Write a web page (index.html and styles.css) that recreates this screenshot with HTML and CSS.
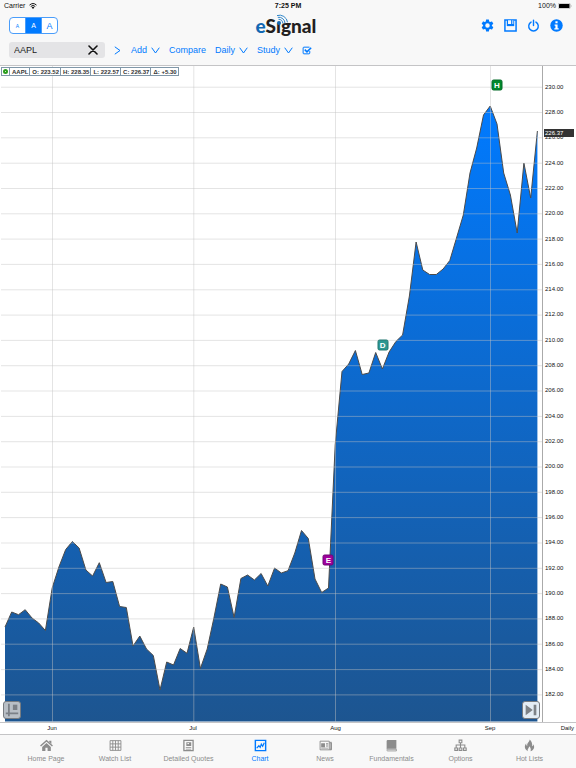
FILE: index.html
```html
<!DOCTYPE html>
<html lang="en">
<head>
<meta charset="utf-8">
<meta name="viewport" content="width=device-width, initial-scale=1">
<title>eSignal - AAPL chart</title>
<link rel="stylesheet" href="styles.css">
</head>
<body>
<header class="header">
  <div class="status">
    <div class="status-left"><span>Carrier</span>
      <svg class="wifi" viewBox="0 0 16 12" aria-hidden="true"><path d="M1 4.2a10.500 10.500 0 0 1 14 0M3.500 6.900a6.800 6.800 0 0 1 9 0" fill="none" stroke="#111" stroke-width="2"/><path d="M5.300 8.800a4 4 0 0 1 5.400 0L8 11.800z" fill="#111"/></svg>
    </div>
    <div class="clock">7:25 PM</div>
    <div class="status-right"><span>100%</span>
      <svg class="battery" viewBox="0 0 28 12" aria-hidden="true"><rect x=".5" y=".5" width="24" height="11" rx="2.500" fill="#fff" stroke="#888"/><rect x="2" y="2" width="21" height="8" rx="1" fill="#000"/><path d="M26 4v4q2-2 0-4z" fill="#888"/></svg>
    </div>
  </div>
  <div class="brand-row">
    <div class="sizes">
      <button class="size size-s" aria-label="Small text">A</button>
      <button class="size size-m active" aria-label="Medium text">A</button>
      <button class="size size-l" aria-label="Large text">A</button>
    </div>
    <div class="logo"><span class="logo-e">e</span>S<span class="logo-i">&#305;<svg class="waves" viewBox="0 0 14 12" aria-hidden="true"><circle cx="3" cy="9" r="2" fill="#1268b3"/><path d="M2.500 5.300a4 4 0 0 1 4.300 4.200M1.800 3.300a6.200 6.200 0 0 1 7.200 6.200M1 1.600a8 8 0 0 1 10.500 6.700" fill="none" stroke="#2f86c9" stroke-width="1"/></svg></span>gnal</div>
    <div class="actions">
      <button aria-label="Settings"><svg viewBox="1 1 22 22"><path fill="currentColor" d="M19.430 12.980c.04-.32.07-.64.07-.98s-.03-.66-.07-.98l2.110-1.650c.19-.15.24-.42.12-.64l-2-3.460c-.12-.22-.39-.3-.61-.22l-2.490 1c-.52-.4-1.080-.73-1.690-.98l-.38-2.650A.49.49 0 0 0 14 2h-4c-.25 0-.46.18-.49.42l-.38 2.650c-.61.25-1.170.59-1.690.98l-2.490-1c-.23-.09-.49 0-.61.22l-2 3.460c-.13.22-.07.49.12.64l2.110 1.650c-.04.32-.07.65-.07.98s.03.66.07.98l-2.110 1.650c-.19.15-.24.42-.12.64l2 3.460c.12.22.39.3.61.22l2.490-1c.52.4 1.080.73 1.690.98l.38 2.650c.03.24.24.42.49.42h4c.25 0 .46-.18.49-.42l.38-2.650c.61-.25 1.170-.59 1.690-.98l2.490 1c.23.09.49 0 .61-.22l2-3.460c.12-.22.07-.49-.12-.64zM12 15.800a3.800 3.800 0 1 1 0-7.600 3.800 3.800 0 0 1 0 7.600z"/></svg></button>
      <button aria-label="Save"><svg viewBox="1.500 1.500 21 21"><path fill="none" stroke="currentColor" stroke-width="2.400" d="M3 3h18v18H3z"/><path fill="currentColor" d="M6 3h12v10H6z"/><path fill="#f8f8f8" d="M8 3.500h5v6H8zM15 3.500h1.500v6H15z"/></svg></button>
      <button aria-label="Log out"><svg viewBox="0 0 24 24"><path fill="none" stroke="currentColor" stroke-width="2.600" stroke-linecap="round" d="M12 2v10M7.500 5.700a8.800 8.800 0 1 0 9 0"/></svg></button>
      <button aria-label="Information"><svg viewBox="0 0 24 24"><circle cx="12" cy="12" r="11.500" fill="currentColor"/><path fill="#fff" d="M10 4h4v4h-4zM8.500 10H14v7h2v2.500H8V17h2v-4.500H8.500z"/></svg></button>
    </div>
  </div>
  <div class="toolbar">
    <div class="symbol">
      <input type="text" value="AAPL" aria-label="Symbol">
      <button class="clear" aria-label="Clear symbol"><svg viewBox="0 0 10 10"><path d="M1 1l8 8M9 1L1 9" fill="none" stroke="#111" stroke-width="1.600" stroke-linecap="round"/></svg></button>
    </div>
    <button class="go" aria-label="Go"><svg viewBox="0 0 7 9"><path d="M.8.8l5.200 3.700-5.200 3.700" fill="none" stroke="currentColor"/></svg></button>
    <button class="tool">Add <svg class="chev" viewBox="0 0 9 7"><path d="M.7.700l3.800 5.300L8.300.7" fill="none" stroke="currentColor"/></svg></button>
    <button class="tool">Compare</button>
    <button class="tool">Daily <svg class="chev" viewBox="0 0 9 7"><path d="M.7.700l3.800 5.300L8.300.7" fill="none" stroke="currentColor"/></svg></button>
    <button class="tool">Study <svg class="chev" viewBox="0 0 9 7"><path d="M.7.700l3.800 5.300L8.300.7" fill="none" stroke="currentColor"/></svg></button>
    <button class="check" aria-label="Select studies"><svg viewBox="0 0 18 16"><path d="M13.500 2H3.500Q2 2 2 3.500v9Q2 14 3.500 14h9q1.500 0 1.500-1.500V9" fill="none" stroke="currentColor" stroke-width="1.800"/><path d="M5 6.500l4 4 7.500-7.500" fill="none" stroke="currentColor" stroke-width="2.800"/></svg></button>
  </div>
</header>

<main class="chart">
  <div class="plot">
    <svg class="area" viewBox="0 66 542 656" preserveAspectRatio="none" role="img" aria-label="AAPL daily price">
      <defs><linearGradient id="fill" gradientUnits="userSpaceOnUse" x1="0" y1="106" x2="0" y2="722"><stop offset="0" stop-color="#007aff"/><stop offset="1" stop-color="#1d5590"/></linearGradient></defs>
      <path id="shape" fill="url(#fill)"/>
      <polyline id="line" fill="none" stroke="#4b4b4b" stroke-width="1"/>
      <g id="grid" stroke="#c4c4c4" stroke-opacity=".45" stroke-width="1"></g>
    </svg>
    <div class="quote"><span class="dot-cell"><i class="dot"></i></span><span>AAPL</span><span>O: 223.52</span><span>H: 228.35</span><span>L: 222.57</span><span>C: 226.37</span><span>&Delta;: +5.30</span></div>
    <b class="pin pin-h">H</b>
    <b class="pin pin-d">D</b>
    <b class="pin pin-e">E</b>
    <button class="corner layout" aria-label="Chart layout"><svg viewBox="0 0 18 18"><path d="M5.500 2v14M2 12.800h14" fill="none" stroke="#7b8087" stroke-width="2"/><path d="M10 3h5v6h-5z" fill="#7b8087"/></svg></button>
    <button class="corner latest" aria-label="Go to latest"><svg viewBox="0 0 18 18"><path d="M3 3l8 6-8 6zM12 3h3v12h-3z" fill="#7d8287"/></svg></button>
  </div>
  <div class="prices">
    <div class="scale">
      <span>230.00</span><span>228.00</span><span>226.00</span><span>224.00</span><span>222.00</span><span>220.00</span><span>218.00</span><span>216.00</span><span>214.00</span><span>212.00</span><span>210.00</span><span>208.00</span><span>206.00</span><span>204.00</span><span>202.00</span><span>200.00</span><span>198.00</span><span>196.00</span><span>194.00</span><span>192.00</span><span>190.00</span><span>188.00</span><span>186.00</span><span>184.00</span><span>182.00</span>
    </div>
    <div class="last">226.37</div>
  </div>
</main>
<div class="dates"><span>Jun</span><span>Jul</span><span>Aug</span><span class="sep">Sep</span><span class="period">Daily</span></div>

<nav class="tabs">
  <a href="#"><svg viewBox="0 0 24 24"><path fill="none" stroke="currentColor" stroke-width="2.600" d="M1 13L12 3l11 10"/><path fill="currentColor" d="M17 3h4v6l-4-3.500zM12 7.500l8 7.200V22h-6v-6h-4v6H4v-7.300z"/></svg>Home Page</a>
  <a href="#"><svg viewBox="0 0 24 24"><path fill="none" stroke="currentColor" stroke-width="1.700" d="M2 3h20v18H2zM2 9h20M2 15h20M7 3v18M12 3v18M17 3v18"/></svg>Watch List</a>
  <a href="#"><svg viewBox="0 0 24 24"><path fill="none" stroke="currentColor" stroke-width="2.400" d="M3.500 2.500h17v19h-17z"/><path fill="currentColor" d="M8 6h9v7H8zM7 15h10v1.500H7zM7 18h10v1.500H7z"/><path fill="#f8f8f8" d="M10 7.500h3v2h-3z"/></svg>Detailed Quotes</a>
  <a href="#" class="active" aria-current="page"><svg viewBox="0 0 24 24"><path fill="none" stroke="currentColor" stroke-width="2.600" d="M2.500 2.500h19v19h-19z"/><path fill="none" stroke="currentColor" stroke-width="2.200" d="M5 17l4-4.500 2.500 3 2-6 2.500 4 3-6.500"/></svg>Chart</a>
  <a href="#"><svg viewBox="0 0 24 24"><path fill="none" stroke="currentColor" stroke-width="1.700" d="M2 4h17v16H2zM19 7h4v13h-4"/><path fill="currentColor" d="M4 8h7v7H4zM13 8h4v2h-4zM13 12h4v2h-4zM4 16h13v1.500H4zM21 5h2v15h-3v-2h1z"/></svg>News</a>
  <a href="#"><svg viewBox="0 0 24 24"><path fill="currentColor" d="M5 2h16v16H5q-2 0-2 2V4q0-2 2-2z"/><path fill="none" stroke="currentColor" stroke-width="1.500" d="M21 19v3H5q-1.500 0-1.500-1.500T5 19h16"/></svg>Fundamentals</a>
  <a href="#"><svg viewBox="0 0 24 24"><path fill="none" stroke="currentColor" stroke-width="2" d="M9.500 2h5v5h-5zM12 7v10M4 16v-5h16v5M1.500 16.500h5V21h-5zM9.500 16.500h5V21h-5zM17.500 16.500h5V21h-5z"/></svg>Options</a>
  <a href="#"><svg viewBox="0 0 24 24"><path fill="currentColor" d="M12 1c1 4-6 7-4 12-2-1-2.500-3-2-5-5 6-2 12 3 14.500-1.500-4 2-5 2.500-9 2.500 2 3.500 6 2.500 9 7-3 8-8 5-13 0 2-.5 3-2 4 .5-5-1-10-5-12.500z"/></svg>Hot Lists</a>
</nav>
<script src="chart.js"></script>
</body>
</html>
```

FILE: styles.css
```css
* { box-sizing: border-box; }
body {
  margin: 0;
  min-height: 100vh;
  display: flex;
  flex-direction: column;
  background: #fff;
  color: #111;
  font-family: "Liberation Sans", Arial, sans-serif;
  font-size: 9px;
}
button {
  padding: 0;
  border: 0;
  background: none;
  color: inherit;
  font: inherit;
  display: flex;
  align-items: center;
  justify-content: center;
}
svg { display: block; }

.header {
  height: 66px;
  flex: none;
  background: #f8f8f8;
  border-bottom: 1px solid #c4c4c6;
  color: #007aff;
}
.status {
  display: grid;
  grid-template-columns: 1fr auto 1fr;
  height: 12px;
  align-items: center;
  padding: 0 4px;
  color: #111;
  font-size: 7px;
  line-height: 12px;
}
.status-left, .status-right { display: flex; align-items: center; gap: 4px; }
.status-right { justify-content: flex-end; gap: 2px; }
.clock { font-weight: bold; }
.wifi { width: 8px; height: 6px; }
.battery { width: 14px; height: 6px; }

.brand-row {
  display: grid;
  grid-template-columns: 1fr auto 1fr;
  height: 27px;
  align-items: center;
  padding: 0 13px 0 9px;
}
.sizes {
  display: flex;
  width: 49px;
  height: 17px;
  border: 1px solid #4a9dfa;
  border-radius: 4px;
  overflow: hidden;
  background: #fff;
}
.size { flex: 1; }
.size + .size { border-left: 1px solid #4a9dfa; }
.size-s { font-size: 5px; }
.size-m { font-size: 7px; }
.size-l { font-size: 9px; }
.size.active { background: #007aff; color: #fff; }
.logo {
  font-family: Lato, sans-serif;
  font-weight: 900;
  font-size: 19px;
  line-height: 27px;
  color: #231f20;
}
.logo-e { color: #1268b3; }
.logo-i { position: relative; }
.waves { position: absolute; left: 0; top: 0; width: 14px; height: 12px; }
.actions { display: flex; justify-content: flex-end; gap: 10px; }
.actions svg { width: 13px; height: 13px; }

.toolbar {
  display: flex;
  align-items: center;
  height: 22px;
  padding-left: 9px;
  font-size: 9px;
}
.symbol {
  display: flex;
  align-items: center;
  width: 96px;
  height: 16px;
  padding: 0 7px 0 5px;
  border-radius: 3px;
  background: #e4e4e6;
}
.symbol input {
  flex: 1;
  min-width: 0;
  padding: 0;
  border: 0;
  background: none;
  color: #222;
  font: inherit;
  outline: none;
}
.clear svg { width: 10px; height: 10px; }
.go { margin: 0 10px 0 9px; }
.go svg { width: 7px; height: 9px; }
.tool { gap: 4px; margin-right: 9px; }
.chev { width: 9px; height: 7px; }
.check svg { width: 10px; height: 9px; }

.chart { flex: 1; display: flex; min-height: 400px; }
.plot { flex: 1; position: relative; min-width: 0; }
.area { position: absolute; inset: 0; width: 100%; height: 100%; }
.quote {
  position: absolute;
  left: 1px;
  top: 1px;
  display: flex;
  height: 9px;
  border: 1px solid #8097a8;
  background: #fff;
  font-size: 6px;
  font-weight: bold;
  line-height: 8px;
  white-space: nowrap;
  color: #333;
}
.quote span { padding: 0 1px 0 2px; }
.quote span + span { border-left: 1px solid #8097a8; }
.quote .dot-cell { display: flex; align-items: center; padding: 0 1px; }
.dot { width: 5px; height: 5px; border: 2px solid #2a9d1c; border-radius: 50%; }
.pin {
  position: absolute;
  width: 11px;
  height: 11px;
  transform: translate(-50%, -50%);
  border: 1px solid;
  border-radius: 2px;
  color: #fff;
  font-size: 8px;
  line-height: 9px;
  text-align: center;
}
.pin-h { left: 91.700%; top: 2.900%; background: #00892c; border-color: #056b28; }
.pin-d { left: 70.600%; top: 42.500%; background: #2c9791; border-color: #237872; }
.pin-e { left: 60.600%; top: 75.300%; background: #a0009c; border-color: #6d0672; }
.corner {
  position: absolute;
  bottom: 3px;
  width: 18px;
  height: 18px;
  border: 1px solid #787c81;
  border-radius: 3px;
  background: #b9bfc6;
}
.corner svg { width: 16px; height: 16px; flex: none; }
.layout { left: 3px; }
.latest { right: 2px; background: #e4edf5; }
.prices {
  position: relative;
  width: 34px;
  flex: none;
  border-left: 1px solid #aaa;
  font-size: 6px;
  color: #111;
}
.scale {
  display: flex;
  flex-direction: column;
  height: 100%;
  padding: 8px 0 15px 2px;
}
.scale span { flex: 1; display: flex; align-items: center; }
.last {
  position: absolute;
  left: 1px;
  right: 2px;
  top: 9.600%;
  height: 8px;
  padding-left: 1px;
  background: #333;
  color: #fff;
  line-height: 8px;
}

.dates {
  display: grid;
  grid-template-columns: 104fr 178fr 107fr 49fr 104fr 34fr;
  height: 12px;
  flex: none;
  border-top: 1px solid #c4c4c6;
  font-size: 6px;
  line-height: 11px;
  text-align: center;
}
.sep { grid-column: 5; }
.period { text-align: right; padding-right: 2px; }

.tabs {
  display: grid;
  grid-template-columns: 68fr 70fr 77fr 66fr 64fr 69fr 69fr 69fr;
  height: 34px;
  flex: none;
  padding: 0 12px;
  border-top: 1px solid #c4c4c6;
  background: #f8f8f8;
}
.tabs a {
  min-width: 0;
  display: flex;
  flex-direction: column;
  align-items: center;
  gap: 3px;
  padding-top: 4px;
  color: #8c8c8c;
  font-size: 7px;
  line-height: 8px;
  text-decoration: none;
  white-space: nowrap;
}
.tabs a.active { color: #007aff; }
.tabs svg { width: 13px; height: 13px; flex: none; }
```

FILE: chart.js
```js
// Height of each daily close in the plot's own units, oldest first.
const closes = [
  627, 612, 614.7, 609.7, 618, 623, 630.5, 588, 567, 549.5, 541.5, 548, 570, 576,
  562.7, 582.5, 581.5, 606.5, 607.5, 646, 636, 649, 655.5, 690, 662, 665, 648.5,
  653.3, 627, 668.5, 649, 618, 584, 587, 617.5, 578.5, 575, 580, 573.5, 586, 568,
  573, 570.7, 553, 530.5, 538.5, 579, 592.5, 588, 445, 371.5, 364, 350.5, 374.5,
  373, 352.5, 369, 352, 341.5, 335, 296, 242, 270, 274.5, 274.5, 269, 260.5, 238,
  215, 173, 148, 115, 106, 124, 173, 195, 233, 163, 198, 131
];
const first = 5, last = 537.4, bottom = 721.5;
const step = (last - first) / (closes.length - 1);
const points = closes.map((y, i) => `${(first + i * step).toFixed(1)},${y}`).join(' ');
document.getElementById('line').setAttribute('points', points);
document.getElementById('shape').setAttribute('d', `M${first},${bottom}L${points}L${last},${bottom}Z`);

let grid = '';
for (let i = 0; i < 25; i++) {
  const y = (87.2 + i * 25.32).toFixed(1);
  grid += `<line x1="1" x2="542" y1="${y}" y2="${y}"/>`;
}
for (const x of [52.5, 193.8, 335.5, 490.5]) {
  grid += `<line x1="${x}" x2="${x}" y1="66" y2="722"/>`;
}
document.getElementById('grid').innerHTML = grid;
```
